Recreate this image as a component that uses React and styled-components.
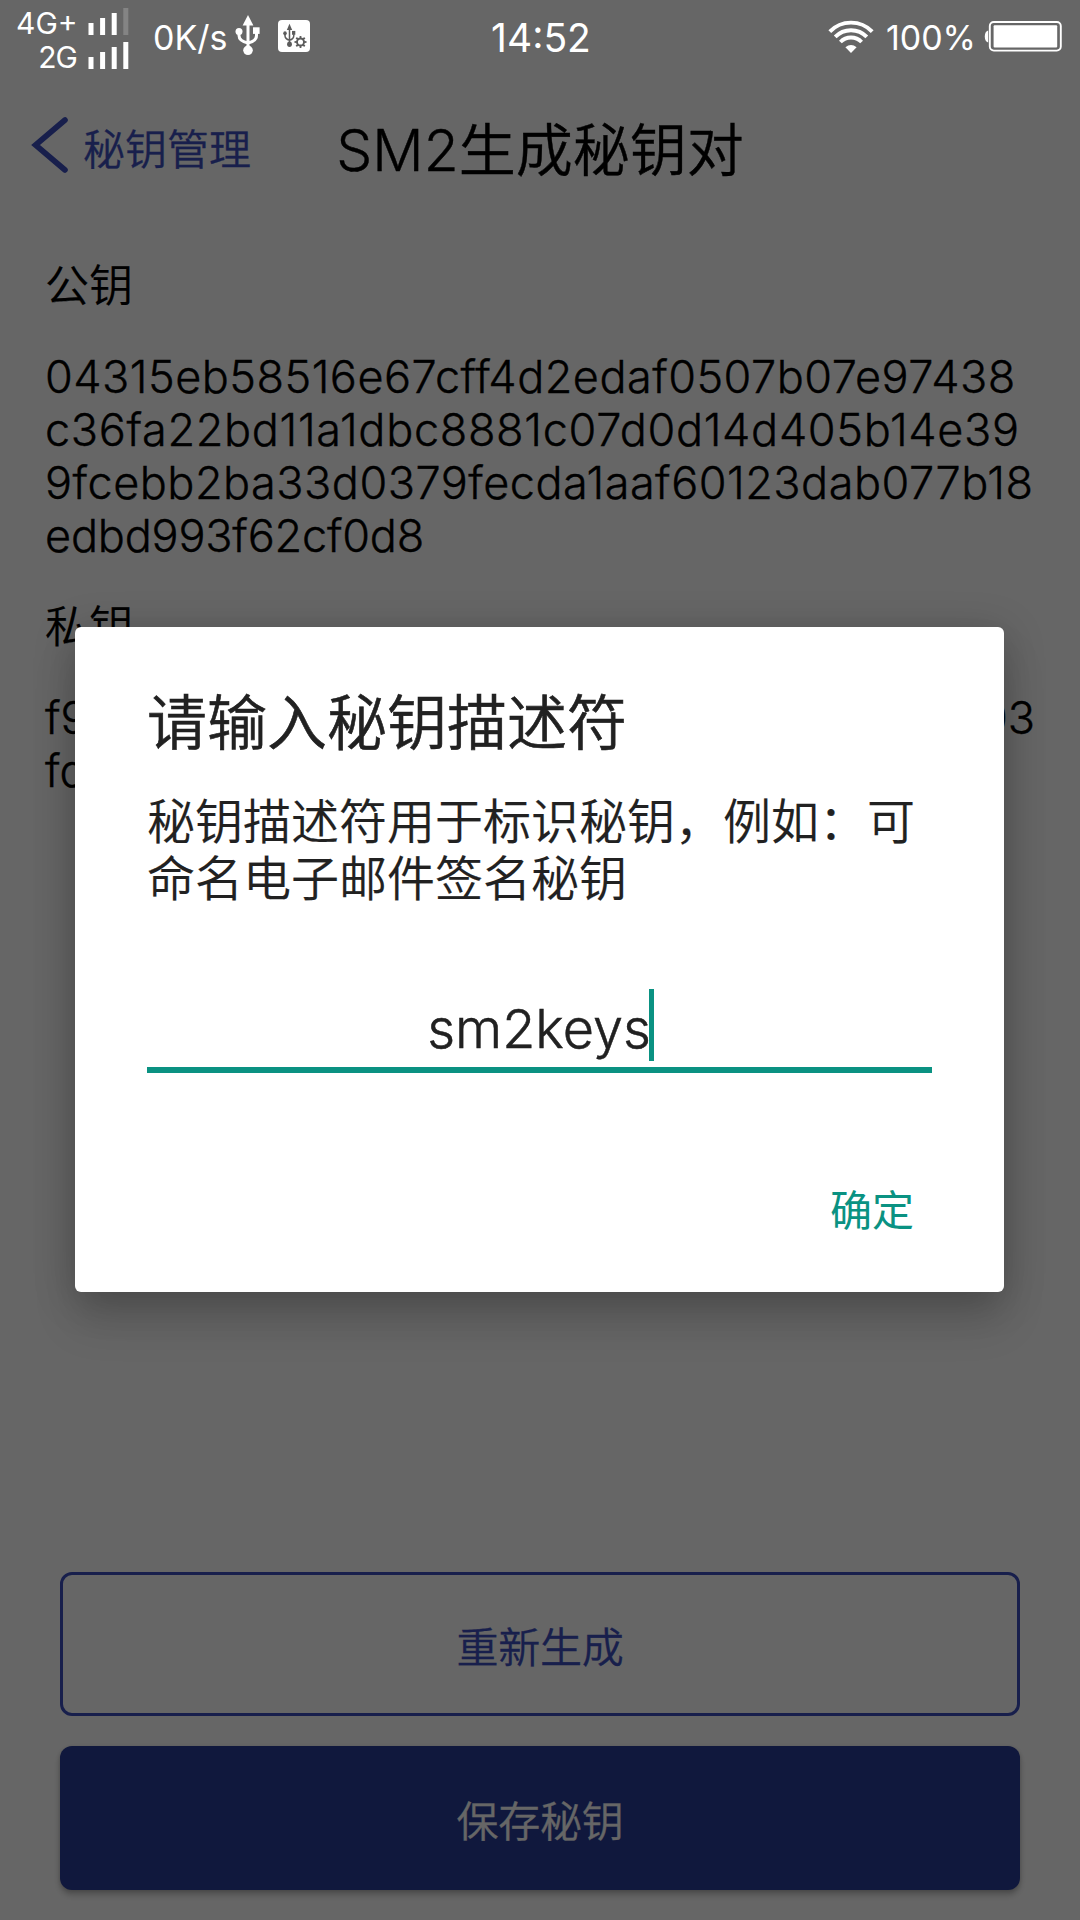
import React from 'react';
import styled, { createGlobalStyle } from 'styled-components';

const GlobalStyle = createGlobalStyle`
  * { box-sizing: border-box; }
  body {
    margin: 0;
    background: #fff;
    font-family: Inter, "Noto Sans CJK SC", sans-serif;
    font-weight: 350;
  }
  button { font: inherit; padding: 0; border: 0; background: none; }
  h1, h2, p { margin: 0; font-weight: inherit; }
`;

const Screen = styled.div`
  position: relative;
  display: flex;
  flex-direction: column;
  width: 1080px;
  height: 1920px;
  overflow: hidden;
  background: #fff;
`;

/* ---- status bar ---- */

const StatusBar = styled.div`
  position: relative;
  z-index: 2;
  display: grid;
  grid-template-columns: 1fr auto 1fr;
  height: 72px;
  padding: 0 18px 0 16px;
  color: #fff;
  font-weight: 400;
`;

const StatusGroup = styled.div`
  display: flex;
  align-items: center;
  justify-content: ${(p) => (p.$end ? 'flex-end' : 'flex-start')};
  height: 75px;
`;

const Sims = styled.div`
  display: flex;
  flex-direction: column;
  width: 114px;
  height: 66px;
`;

const Sim = styled.div`
  display: flex;
  align-items: center;
  justify-content: space-between;
  height: 34px;
`;

const Carrier = styled.span`
  width: 61px;
  padding-top: 3px;
  font-size: 30px;
  line-height: 34px;
  text-align: right;
  letter-spacing: ${(p) => p.$spacing || 0}px;
`;

const StatusText = styled.span`
  font-size: 34px;
  line-height: 40px;
  margin-left: ${(p) => p.$left}px;
  white-space: nowrap;
`;

const Clock = styled.div`
  font-size: 39px;
  line-height: 76px;
  height: 75px;
  padding-left: 4px;
`;

const Glyph = styled.svg`
  display: block;
  flex: none;
  margin-left: ${(p) => p.$left || 0}px;
  margin-bottom: ${(p) => p.$lift || 0}px;
`;

/* ---- page behind the dialog ---- */

const Header = styled.header`
  display: grid;
  grid-template-columns: 1fr auto 1fr;
  align-items: center;
  height: 156px;
  padding: 0 30px;
`;

const BackButton = styled.button`
  display: flex;
  align-items: center;
  gap: 13px;
  color: #3c4fbe;
  font-size: 42px;
  line-height: 60px;
  -webkit-text-stroke: 0.3px currentColor;
`;

const Title = styled.h1`
  font-size: 57px;
  line-height: 80px;
  padding-top: 2px;
  color: #000;
  -webkit-text-stroke: 0.4px currentColor;
`;

const Content = styled.main`
  flex: 1;
  padding: 28px 45px 0;
  color: #000;
  -webkit-text-stroke: 0.4px currentColor;
`;

const Label = styled.h2`
  font-size: 44px;
  line-height: 60px;
  margin-bottom: 34px;
  -webkit-text-stroke: 0.2px currentColor;
`;

const KeyBlock = styled.div`
  font-size: 45px;
  line-height: 53px;
  margin-bottom: 35px;
`;

const KeyLine = styled.div`
  display: flex;
  justify-content: space-between;
  white-space: nowrap;
  letter-spacing: ${(p) => p.$spacing || 0}px;
`;

const Footer = styled.footer`
  display: flex;
  flex-direction: column;
  gap: 30px;
  padding: 0 60px 30px;
`;

const ActionButton = styled.button`
  height: 144px;
  border-radius: 12px;
  font-size: 42px;
  letter-spacing: -0.2px;
  -webkit-text-stroke: 0.3px currentColor;
  color: ${(p) => (p.$primary ? '#fff' : '#3c4fbe')};
  background: ${(p) => (p.$primary ? '#283c98' : 'transparent')};
  ${(p) =>
    p.$primary
      ? 'box-shadow: 0 5px 6px rgba(0, 0, 0, 0.22), 0 1px 4px rgba(0, 0, 0, 0.15);'
      : '&& { border: 3px solid #3c4fbe; }'}
`;

/* ---- dialog ---- */

const Scrim = styled.div`
  position: absolute;
  inset: 0;
  z-index: 1;
  display: flex;
  flex-direction: column;
  padding: 627px 76px 0 75px;
  background: rgba(0, 0, 0, 0.6);
`;

const Dialog = styled.section`
  display: flex;
  flex-direction: column;
  height: 665px;
  padding: 53px 72px 0;
  border-radius: 6px;
  background: #fff;
  color: #212121;
  box-shadow: 0 30px 44px rgba(0, 0, 0, 0.13), 0 6px 42px rgba(0, 0, 0, 0.22);
`;

const DialogTitle = styled.h2`
  font-size: 60px;
  line-height: 86px;
  -webkit-text-stroke: 0.6px currentColor;
`;

const DialogText = styled.p`
  margin-top: 27px;
  font-size: 48px;
  line-height: 57px;
  white-space: nowrap;
  -webkit-text-stroke: 0.2px currentColor;
`;

const Field = styled.div`
  display: flex;
  justify-content: center;
  height: 90px;
  margin-top: 76px;
  padding-right: 1px;
  border-bottom: 6px solid #0a9282;
  font-size: 54px;
  line-height: 91px;
  -webkit-text-stroke: 0.5px currentColor;
`;

const FieldValue = styled.span`
  position: relative;
`;

const Caret = styled.span`
  position: absolute;
  right: -3px;
  top: 6px;
  width: 5px;
  height: 72px;
  background: #0a9282;
`;

const DialogActions = styled.div`
  display: flex;
  justify-content: flex-end;
  margin-top: 108px;
  padding-right: 18px;
`;

const ConfirmButton = styled.button`
  color: #0a9282;
  font-size: 42px;
  line-height: 60px;
  font-weight: 400;
`;

/* ---- icons ---- */

function Signal({ bars }) {
  return (
    <Glyph width="42" height="28" viewBox="0 0 42 28">
      {bars.map((on, i) => (
        <rect
          key={i}
          x={0.5 + i * 11.6}
          y={15 - i * 5}
          width="5"
          height={12 + i * 5}
          fill="#fff"
          fillOpacity={on ? 1 : 0.2}
        />
      ))}
    </Glyph>
  );
}

function UsbShape({ color }) {
  return (
    <g fill={color}>
      <path d="M13 0 18.4 10.5H7.6Z" />
      <path
        d="M13 9V35M4 17V20.5Q4 26 13 28M21.5 18V20.5Q21.5 26 13 28"
        fill="none"
        stroke={color}
        strokeWidth="3"
      />
      <circle cx="13" cy="35.3" r="4.8" />
      <circle cx="4" cy="16.5" r="3.5" />
      <rect x="18" y="12.3" width="6.6" height="6.6" />
    </g>
  );
}

function UsbIcon() {
  return (
    <Glyph width="26" height="41" viewBox="0 0 26 41" $left={7} $lift={5}>
      <UsbShape color="#fff" />
    </Glyph>
  );
}

function UsbSettingsIcon() {
  const teeth = [0, 45, 90, 135, 180, 225, 270, 315];
  return (
    <Glyph width="32" height="32" viewBox="0 0 32 32" $left={17} $lift={3}>
      <rect width="32" height="32" rx="4" fill="#fff" />
      <g transform="translate(5 3.8) scale(.5 .58)">
        <UsbShape color="#5c5c5c" />
      </g>
      <circle cx="22.5" cy="22" r="6.4" fill="#fff" />
      <circle cx="22.5" cy="22" r="3.5" fill="none" stroke="#5c5c5c" strokeWidth="1.9" />
      {teeth.map((a) => (
        <rect
          key={a}
          x="21.6"
          y="16"
          width="1.8"
          height="2.4"
          fill="#5c5c5c"
          transform={`rotate(${a} 22.5 22)`}
        />
      ))}
    </Glyph>
  );
}

function WifiIcon() {
  return (
    <Glyph width="46" height="34" viewBox="0 0 46 34" $lift={2}>
      <g fill="none" stroke="#fff" strokeWidth="3.9">
        <path d="M1.8 11.6A29.5 29.5 0 0 1 44.2 11.6" />
        <path d="M7.2 16.9A22 22 0 0 1 38.8 16.9" />
        <path d="M12.4 22A14.9 14.9 0 0 1 33.6 22" />
      </g>
      <path d="M23 33 17.4 27.2Q23 22.8 28.6 27.2Z" fill="#fff" />
    </Glyph>
  );
}

function BatteryIcon() {
  return (
    <Glyph width="78" height="31" viewBox="0 0 78 31" $left={8} $lift={2}>
      <path d="M4.2 9.5V21.5Q0.8 20.5 0.8 15.5T4.2 9.5Z" fill="#fff" />
      <rect x="5.8" y="1" width="71" height="28.6" rx="4" fill="none" stroke="#fff" strokeWidth="1.9" />
      <rect x="9.6" y="4.2" width="63.6" height="22.2" rx="1" fill="#fff" />
    </Glyph>
  );
}

function BackIcon() {
  return (
    <Glyph width="40" height="58" viewBox="0 0 40 58" $lift={10}>
      <path
        d="M35 4 5.5 29 35 54"
        fill="none"
        stroke="#3c4fbe"
        strokeWidth="5.6"
        strokeLinecap="round"
      />
    </Glyph>
  );
}

const publicKey = [
  ['04315eb58516e67cff4d2edaf0507b07e97438', 0.48],
  ['c36fa22bd11a1dbc8881c07d0d14d405b14e39', 0.68],
  ['9fcebb2ba33d0379fecda1aaf60123dab077b18', 0.5],
  ['edbd993f62cf0d8', -0.2],
];

export default function App() {
  return (
    <Screen>
      <GlobalStyle />
      <StatusBar>
        <StatusGroup>
          <Sims>
            <Sim>
              <Carrier>4G+</Carrier>
              <Signal bars={[1, 1, 1, 0]} />
            </Sim>
            <Sim>
              <Carrier $spacing={-1}>2G</Carrier>
              <Signal bars={[1, 1, 1, 1]} />
            </Sim>
          </Sims>
          <StatusText $left={23}>0K/s</StatusText>
          <UsbIcon />
          <UsbSettingsIcon />
        </StatusGroup>
        <Clock>14:52</Clock>
        <StatusGroup $end>
          <WifiIcon />
          <StatusText $left={12}>100%</StatusText>
          <BatteryIcon />
        </StatusGroup>
      </StatusBar>

      <Header>
        <BackButton>
          <BackIcon />
          秘钥管理
        </BackButton>
        <Title>SM2生成秘钥对</Title>
        <span />
      </Header>

      <Content>
        <Label>公钥</Label>
        <KeyBlock>
          {publicKey.map(([text, spacing]) => (
            <KeyLine key={text} $spacing={spacing}>
              {text}
            </KeyLine>
          ))}
        </KeyBlock>
        <Label>私钥</Label>
        <KeyBlock>
          <KeyLine>
            <span>f9</span>
            <span>03</span>
          </KeyLine>
          <KeyLine>fd</KeyLine>
        </KeyBlock>
      </Content>

      <Footer>
        <ActionButton>重新生成</ActionButton>
        <ActionButton $primary>保存秘钥</ActionButton>
      </Footer>

      <Scrim>
        <Dialog>
          <DialogTitle>请输入秘钥描述符</DialogTitle>
          <DialogText>
            秘钥描述符用于标识秘钥，例如：可
            <br />
            命名电子邮件签名秘钥
          </DialogText>
          <Field>
            <FieldValue>
              sm2keys
              <Caret />
            </FieldValue>
          </Field>
          <DialogActions>
            <ConfirmButton>确定</ConfirmButton>
          </DialogActions>
        </Dialog>
      </Scrim>
    </Screen>
  );
}
